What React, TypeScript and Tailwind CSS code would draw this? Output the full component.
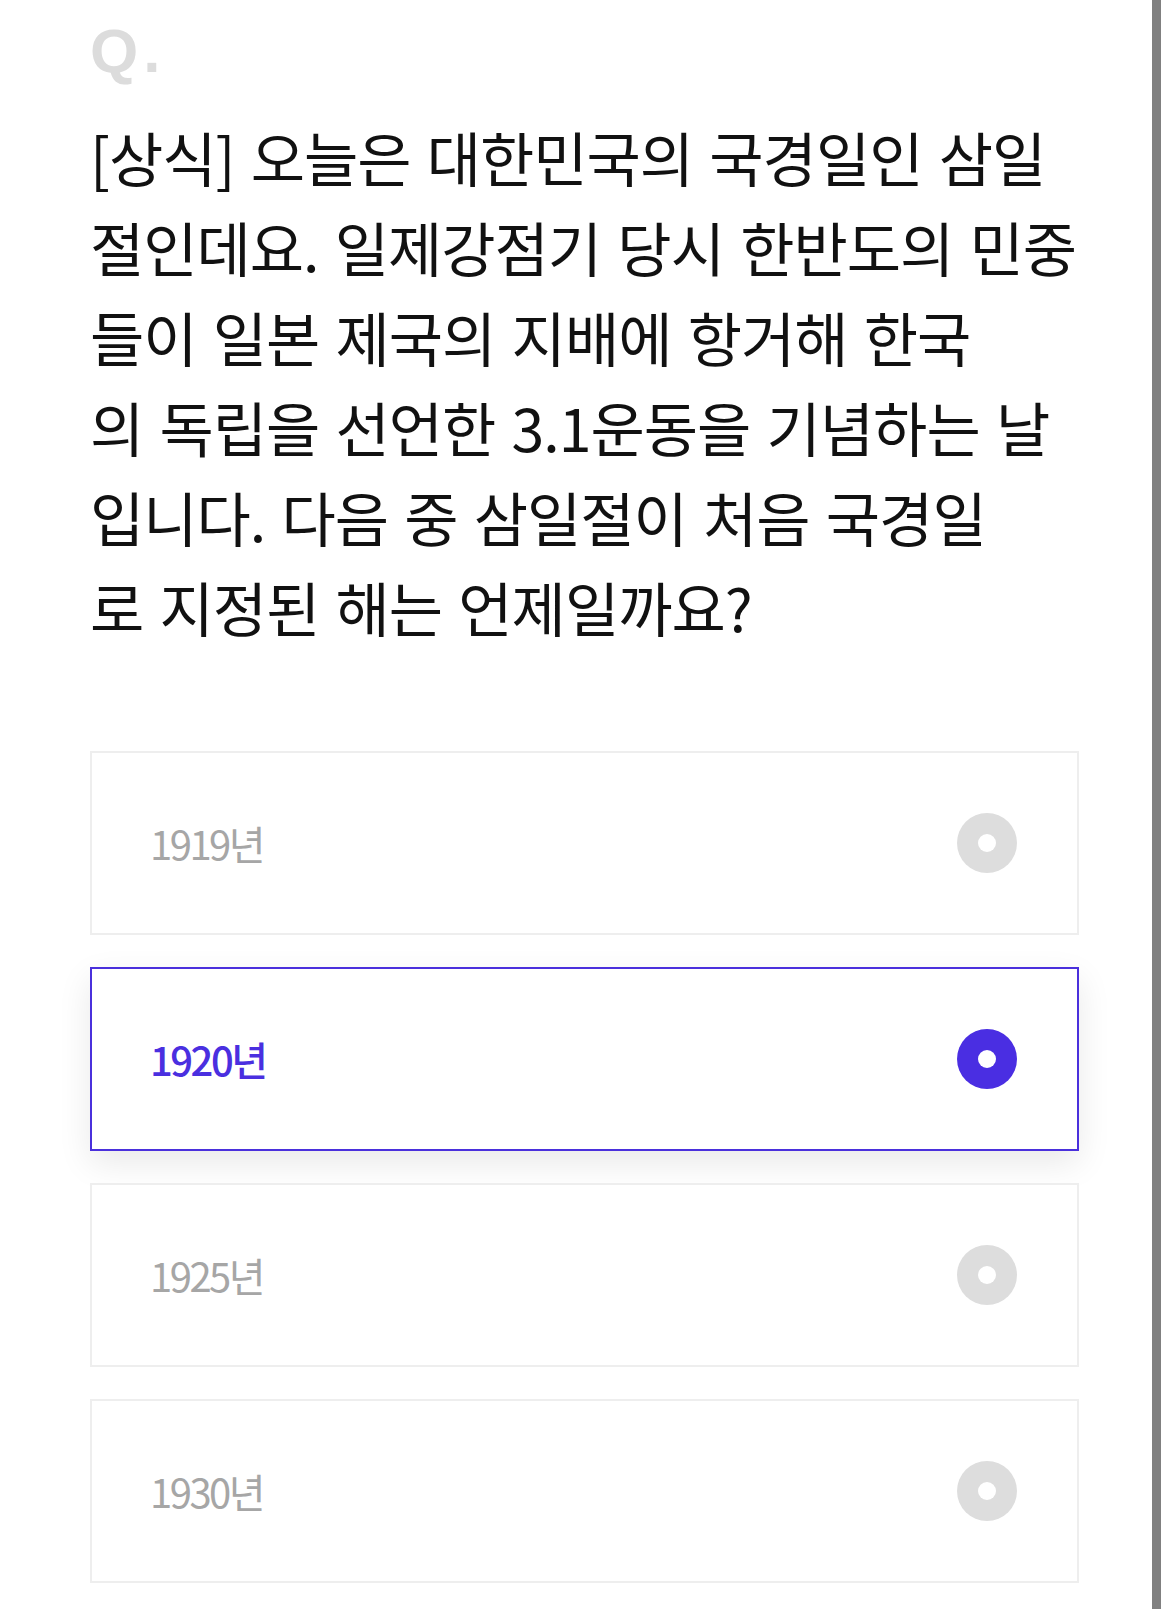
const options = [
  { year: "1919년", selected: false },
  { year: "1920년", selected: true },
  { year: "1925년", selected: false },
  { year: "1930년", selected: false },
];

const questionLines = [
  "[상식] 오늘은 대한민국의 국경일인 삼일",
  "절인데요. 일제강점기 당시 한반도의 민중",
  "들이 일본 제국의 지배에 항거해 한국",
  "의 독립을 선언한 3.1운동을 기념하는 날",
  "입니다. 다음 중 삼일절이 처음 국경일",
  "로 지정된 해는 언제일까요?",
];

const Option = ({ year, selected }: { year: string; selected: boolean }) => (
  <li
    className={
      selected
        ? "flex h-[184px] items-center justify-between border-2 border-[#4a30dc] bg-white pl-[58px] pr-[60px] shadow-[0_12px_32px_rgba(0,0,0,0.09)]"
        : "flex h-[184px] items-center justify-between border-2 border-[#eeeeee] bg-white pl-[58px] pr-[60px]"
    }
  >
    <span
      className={
        selected
          ? "text-[40px] font-medium tracking-[-2.5px] text-[#4a2fe0]"
          : "text-[40px] font-normal tracking-[-2.5px] text-[#a6a6a6]"
      }
    >
      {year}
    </span>
    <span
      className={
        selected
          ? "flex h-[60px] w-[60px] items-center justify-center rounded-full bg-[#4a2ee2]"
          : "flex h-[60px] w-[60px] items-center justify-center rounded-full bg-[#dddddd]"
      }
    >
      <span className="h-[18px] w-[18px] rounded-full bg-white" />
    </span>
  </li>
);

const App = () => (
  <div className="flex min-h-screen w-full bg-white font-['Noto_Sans_CJK_KR',sans-serif]">
    <div className="flex w-[1152px] flex-col pl-[90px] pr-[73px] pt-[20px]">
      <div className="h-[64px] font-['Liberation_Sans',sans-serif] text-[62px] font-bold leading-none tracking-[5px] text-[#dcdcdc]">
        Q.
      </div>

      <h1 className="mt-[28px] text-[59px] font-normal leading-[90px] tracking-[-1px] [word-spacing:4px] text-[#111111]">
        {questionLines.map((line) => (
          <span key={line} className="block whitespace-nowrap">
            {line}
          </span>
        ))}
      </h1>

      <ul className="mt-[99px] flex flex-col gap-[32px]">
        {options.map((o) => (
          <Option key={o.year} year={o.year} selected={o.selected} />
        ))}
      </ul>
    </div>
    <div className="w-[9px] bg-[#808080]" />
    <div className="flex-1 bg-white" />
  </div>
);

export default App;
